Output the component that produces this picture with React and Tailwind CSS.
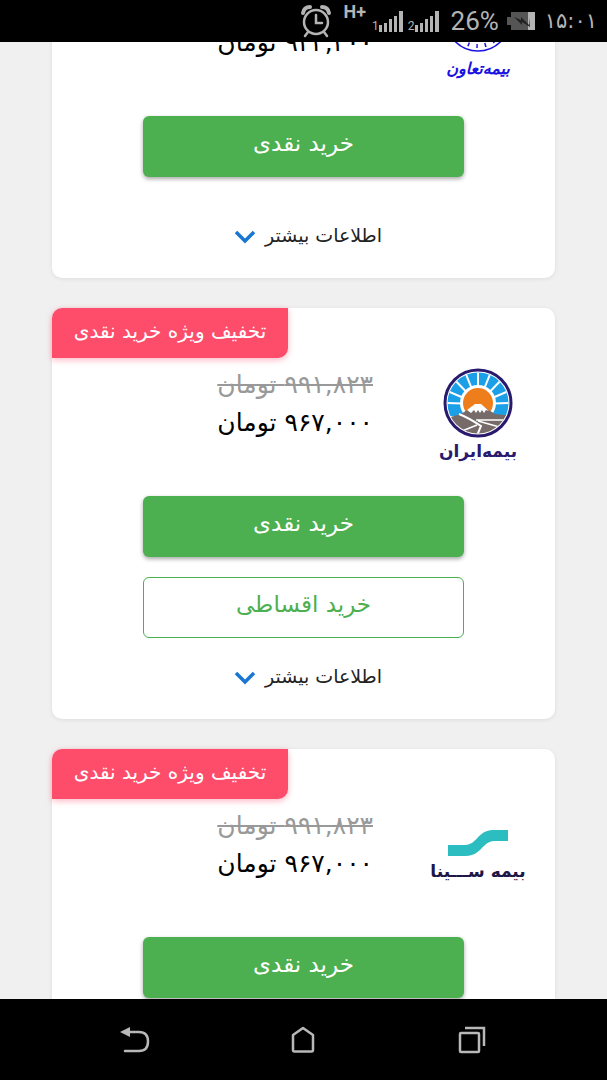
import { useLayoutEffect, useRef } from 'react';

const offers = [
  { id: 'taavon', logo: TaavonLogo, price: '۹۳۳,۳۰۰', special: false, installment: false },
  { id: 'iran', logo: IranLogo, oldPrice: '۹۹۱,۸۲۳', price: '۹۶۷,۰۰۰', special: true, installment: true },
  { id: 'sina', logo: SinaLogo, oldPrice: '۹۹۱,۸۲۳', price: '۹۶۷,۰۰۰', special: true, installment: true },
];

function TaavonLogo() {
  return (
    <div className="flex flex-col items-center text-[#1a12e0]">
      <svg width="66" height="66" viewBox="0 0 66 66" fill="none" stroke="currentColor">
        <circle cx="33" cy="33" r="32" strokeWidth="1.5" />
        <circle cx="33" cy="33" r="22" strokeWidth="1.5" />
        <circle cx="33" cy="33" r="27" strokeWidth="4" strokeDasharray="1.5 7" />
      </svg>
      <span className="text-[16px] font-bold italic leading-[34px] whitespace-nowrap">بیمه‌تعاون</span>
    </div>
  );
}

function IranLogo() {
  const rays = [-88, -67, -44, -22, 0, 22, 44, 67, 88];
  return (
    <div className="flex flex-col items-center text-[#2a1a6e]">
      <svg width="70" height="70" viewBox="0 0 70 70">
        <defs>
          <clipPath id="iran-disc">
            <circle cx="35" cy="35" r="30.5" />
          </clipPath>
        </defs>
        <circle cx="35" cy="35" r="33" fill="#fff" stroke="#2a1a6e" strokeWidth="3" />
        <g clipPath="url(#iran-disc)">
          <rect width="70" height="48" fill="#1b9fe6" />
          <g stroke="#fff" strokeWidth="2">
            {rays.map((a) => (
              <line key={a} x1="35" y1="36" x2="35" y2="-4" transform={`rotate(${a} 35 36)`} />
            ))}
          </g>
          <circle cx="35" cy="35" r="18" fill="#fff" />
          <circle cx="35" cy="35" r="15" fill="#ee7d1b" />
          <path d="M0 51 L18 46 L32 37 H38 L52 46 L70 48 V70 H0Z" fill="#776b69" />
          <path d="M32 36 H38 L46 43 L43 42 L41 45 L39 42 L37 45 L35 42 L33 45 L31 42 L28 45 L24 42Z" fill="#fff" />
          <path d="M16 46 Q26 50 38 58 L33 70" fill="none" stroke="#fff" strokeWidth="2" />
          <path d="M33 52 L70 52 M35 53 L60 60 M34 57 L14 65" fill="none" stroke="#fff" strokeWidth="1.5" />
        </g>
      </svg>
      <span className="text-[17px] font-bold leading-[26px] whitespace-nowrap">بیمه‌ایران</span>
    </div>
  );
}

function SinaLogo() {
  return (
    <div className="flex flex-col items-center text-[#1c1748]">
      <svg width="62" height="28" viewBox="0 0 62 28">
        <path d="M1 16 H18 C30 16 31 1 46 1 H61 V12 H47 C36 12 34 27 19 27 H1Z" fill="#2bbdbf" />
      </svg>
      <span className="text-[17px] font-bold leading-7 whitespace-nowrap">بیمه ســـینا</span>
    </div>
  );
}

function SignalBars() {
  return (
    <svg width="24" height="21" viewBox="0 0 24 21" fill="currentColor">
      <path d="M0 14h3v7h-3z M5 12h3v9h-3z M10 8h3v13h-3z M15 5h3v16h-3z M20 0h4v21h-4z" />
    </svg>
  );
}

function StatusBar() {
  return (
    <header dir="ltr" className="flex h-[42px] shrink-0 items-center justify-end bg-black pr-[10px] font-['Roboto',sans-serif] text-[#b4b4b4]">
      <svg width="32" height="34" viewBox="0 0 32 34" fill="none" stroke="currentColor" strokeWidth="2.5" strokeLinecap="round">
        <circle cx="16" cy="18" r="12" />
        <path d="M16 11 V19 H22 M8 28 L5 32 M24 28 L27 32" />
        <path d="M3 9 Q4 3 10 3 M29 9 Q28 3 22 3" strokeWidth="4" />
      </svg>
      <span className="ml-[11px] self-start pt-[2px] text-[18px] font-bold leading-5">H+</span>
      <div className="ml-[6px] flex items-end">
        <span className="text-[12px] leading-3">1</span>
        <SignalBars />
        <span className="ml-[5px] text-[12px] leading-3">2</span>
        <SignalBars />
      </div>
      <span className="ml-3 text-[26px] leading-8">26%</span>
      <svg className="ml-2" width="28" height="20" viewBox="0 0 28 20">
        <path d="M0 6 H4 V1 H28 V19 H4 V14 H0Z" fill="#555" />
        <path d="M21 1 H28 V19 H21Z" fill="#b4b4b4" />
        <path d="M7 6 L14 9 V6 L22 14 V7 L23 16 L15 11 V14Z" fill="#222" />
      </svg>
      <span className="ml-[10px] font-['DejaVu_Sans',sans-serif] text-[21px] leading-8">۱۵:۰۱</span>
    </header>
  );
}

function OfferCard({ offer }) {
  const Logo = offer.logo;
  return (
    <article className="relative rounded-[10px] bg-white shadow-[0_1px_4px_rgba(0,0,0,0.08)]">
      {offer.special && (
        <div className="absolute left-0 top-0 flex h-[50px] w-[236px] justify-center rounded-tl-[10px] rounded-br-[10px] bg-[#fe4c6b] text-[20px] leading-[46px] text-white shadow-[0_2px_6px_rgba(254,76,107,0.4)]">
          تخفیف ویژه خرید نقدی
        </div>
      )}
      <div className="flex pt-[58px] pb-[30px]">
        <div className="flex h-[100px] w-[154px] items-center justify-center">
          <Logo />
        </div>
        <div className="flex h-[76px] flex-col justify-end ps-7 text-[25px] leading-[38px] whitespace-nowrap">
          {offer.oldPrice && <div className="text-[#999] line-through decoration-2">{offer.oldPrice} تومان</div>}
          <div className="text-black">{offer.price} تومان</div>
        </div>
      </div>
      <div className="mx-auto flex w-[64%] flex-col gap-5">
        <button type="button" className="h-[61px] rounded-md bg-[#4caf50] pb-1.5 text-[23px] text-white shadow-[0_2px_4px_rgba(0,0,0,0.35)]">
          خرید نقدی
        </button>
        {offer.installment ? (
          <button type="button" className="h-[61px] rounded-md border border-[#4caf50] pb-1.5 text-[23px] text-[#4caf50]">
            خرید اقساطی
          </button>
        ) : (
          <div />
        )}
      </div>
      <div className="flex justify-center pt-5 pb-[25px]">
        <button type="button" className="flex h-9 items-center text-[19px] text-[#222]">
          اطلاعات بیشتر
          <svg className="w-10" height="36" viewBox="0 0 40 36" fill="none" stroke="#1976d2" strokeWidth="3.5">
            <path d="M11 15 L20 24 L29 15" />
          </svg>
        </button>
      </div>
    </article>
  );
}

function NavBar() {
  return (
    <nav dir="ltr" className="grid h-[81px] shrink-0 grid-cols-3 bg-black px-[51px] text-[#b8b8b8]">
      <button type="button" aria-label="Back" className="flex items-center justify-center">
        <svg width="30" height="28" viewBox="0 0 30 28" fill="none" stroke="currentColor" strokeWidth="2.5" strokeLinecap="round">
          <path d="M9 6 H19 Q28 6 28 15.5 Q28 25 19 25 H5" />
          <path d="M0 6 L10 1 V11Z" fill="currentColor" stroke="none" />
        </svg>
      </button>
      <button type="button" aria-label="Home" className="flex items-center justify-center">
        <svg width="24" height="28" viewBox="0 0 24 28" fill="none" stroke="currentColor" strokeWidth="2.5" strokeLinejoin="round">
          <path d="M12 2 L22 9 V24 Q22 25.5 20.5 25.5 H3.5 Q2 25.5 2 24 V9Z" />
        </svg>
      </button>
      <button type="button" aria-label="Recent apps" className="flex items-center justify-center">
        <svg width="28" height="28" viewBox="0 0 28 28" fill="none" stroke="currentColor" strokeWidth="2.5">
          <rect x="2" y="7" width="19" height="19" rx="1" />
          <path d="M7 2 H26 V20" />
        </svg>
      </button>
    </nav>
  );
}

function App() {
  const listRef = useRef(null);

  // the list opens a little way down the first offer
  useLayoutEffect(() => {
    listRef.current.scrollTop = 114;
  }, []);

  return (
    <div dir="rtl" className="flex h-screen flex-col bg-[#f0f0f0] font-['DejaVu_Sans',sans-serif]">
      <StatusBar />
      <main ref={listRef} className="min-h-0 flex-1 overflow-y-auto [scrollbar-width:none]">
        <div className="flex flex-col gap-[30px] px-[52px]">
          {offers.map((offer) => (
            <OfferCard key={offer.id} offer={offer} />
          ))}
        </div>
      </main>
      <NavBar />
    </div>
  );
}

export default App;
